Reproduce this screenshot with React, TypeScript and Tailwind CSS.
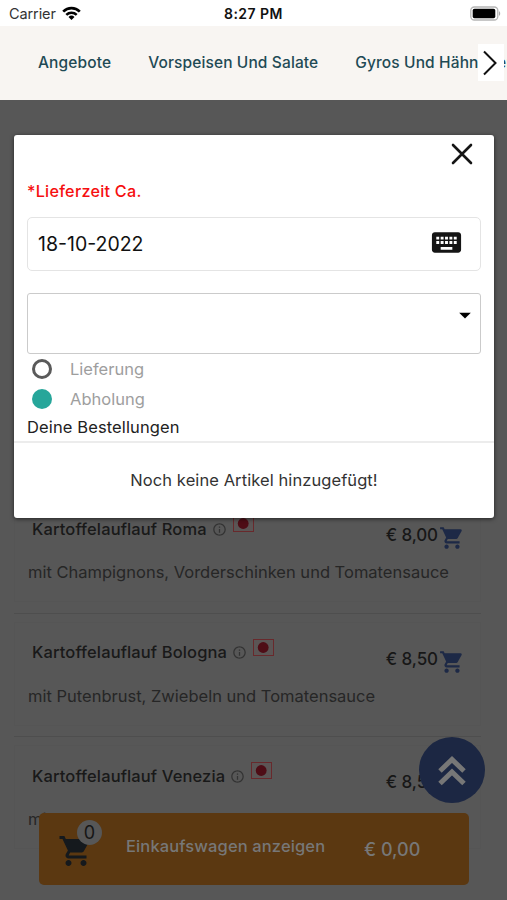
import { MdInfoOutline, MdKeyboard, MdShoppingCart, MdArrowDropDown } from "react-icons/md";

const categories = ["Angebote", "Vorspeisen Und Salate", "Gyros Und Hähnchen"];

const dishes = [
  {
    id: 1,
    name: "Kartoffelauflauf Roma",
    description: "mit Champignons, Vorderschinken und Tomatensauce",
    price: "€ 8,00",
  },
  {
    id: 2,
    name: "Kartoffelauflauf Bologna",
    description: "mit Putenbrust, Zwiebeln und Tomatensauce",
    price: "€ 8,50",
  },
  {
    id: 3,
    name: "Kartoffelauflauf Venezia",
    description: "mit",
    price: "€ 8,50",
  },
];

function StatusBar() {
  return (
    <div className="relative flex h-[26px] items-center justify-between bg-white pl-[9px] pr-[6px] text-[#111]">
      <div className="flex items-center gap-[6px] pt-[2px]">
        <span className="text-[14.5px] leading-5 tracking-[-0.1px] text-[#333]">Carrier</span>
        <svg width="19" height="15" viewBox="0 0 19 15" fill="none" stroke="#000" className="mb-[2px]">
          <path d="M1.2 5.6a11.8 11.8 0 0 1 16.6 0" strokeWidth="2.7" />
          <path d="M4.3 8.8a7.4 7.4 0 0 1 10.4 0" strokeWidth="2.5" />
          <path d="M9.5 14l-3-3.1a4.3 4.3 0 0 1 6 0z" fill="#000" stroke="none" />
        </svg>
      </div>
      <span className="absolute left-[224px] top-[4px] whitespace-nowrap text-[14px] font-semibold leading-5 tracking-[0.45px]">8:27 PM</span>
      <svg width="31" height="15" viewBox="0 0 31 15" className="shrink-0">
        <rect x="0.8" y="1" width="27" height="13" rx="3.5" fill="#fff" stroke="#b5b5b5" strokeWidth="1.3" />
        <rect x="2.7" y="2.7" width="22.6" height="9.6" rx="1.8" fill="#000" />
        <path d="M29 5.2c1.6.6 1.6 4 0 4.6z" fill="#aaa" />
      </svg>
    </div>
  );
}

function CategoryNav() {
  return (
    <nav className="relative flex h-[74px] items-center gap-[37px] overflow-hidden bg-[#f8f5f2] pl-[38px]">
      {categories.map((category) => (
        <a key={category} className="shrink-0 whitespace-nowrap text-[15.5px] font-medium tracking-[0.12px] text-[#1f4a55]">
          {category}
        </a>
      ))}
      <button type="button" className="absolute left-[478px] top-[18px] flex h-[37px] w-[26px] items-center justify-center bg-white">
        <svg width="16" height="26" viewBox="0 0 16 26" fill="none" stroke="#111" strokeWidth="2" className="-ml-[2px]">
          <path d="M2 1.500l11.500 11.500L2 24.500" />
        </svg>
      </button>
    </nav>
  );
}

function Dish({ name, description, price }: { name: string; description: string; price: string }) {
  return (
    <div className="h-[123.5px] border-t border-[#4e4e4e] pt-[8px]">
      <div className="h-[104px] border border-[#555] pl-[13px] pr-[15px] pt-[17px]">
        <div className="flex h-[26px] justify-between">
          <div className="flex items-center pl-[4px]">
            <span className="text-[16.5px] font-medium tracking-[0.12px] text-[#191919]">{name}</span>
            <MdInfoOutline className="ml-[5px] text-[15px] text-[#333]" />
            <svg width="21" height="17" viewBox="0 0 21 17" className="mb-[11px] ml-[6px]">
              <rect x="0.5" y="0.5" width="20" height="16" fill="#5b5555" stroke="#68292c" />
              <circle cx="10.2" cy="8.5" r="5.4" fill="#4e0d16" />
            </svg>
          </div>
          <div className="flex items-center pt-[14px]">
            <span className="text-[17px] font-medium tracking-[-0.1px] text-[#171717]">{price}</span>
            <MdShoppingCart className="ml-px mt-[4px] text-[26px] text-[#1d2946]" />
          </div>
        </div>
        <p className="mt-[18px] whitespace-nowrap text-[16.5px] leading-6 text-[#262626]">{description}</p>
      </div>
    </div>
  );
}

function CartBar() {
  return (
    <div className="absolute left-[39px] top-[813px] flex h-[72px] w-[430px] items-center rounded-[5px] bg-[#5b3811]">
      <div className="relative ml-[19px] h-full w-[50px]">
        <MdShoppingCart className="absolute left-0 top-[20px] text-[36px] text-[#15191d]" />
        <span className="absolute left-[19px] top-[7px] flex size-[25px] items-center justify-center rounded-full bg-[#575757] text-[18px] text-[#151515]">
          0
        </span>
      </div>
      <span className="ml-[18px] mt-[-6px] w-[238px] whitespace-nowrap text-[16.5px] font-medium tracking-[0.12px] text-[#777]">
        Einkaufswagen anzeigen
      </span>
      <span className="whitespace-nowrap text-[18px] font-medium text-[#777]">€ 0,00</span>
    </div>
  );
}

function OrderDialog() {
  return (
    <div className="absolute left-[14px] top-[135px] h-[383px] w-[480px] rounded-[3px] bg-white pt-[7px] shadow-[0_1px_4px_rgba(0,0,0,0.6)]">
      <div className="flex h-[24px] justify-end pr-[21px]">
        <svg width="22" height="22" viewBox="0 0 22 22" stroke="#151515" strokeWidth="2.6" strokeLinecap="round" className="mt-px">
          <path d="M2 2l18 18M20 2L2 20" />
        </svg>
      </div>
      <div className="pl-[13px] pr-[13px]">
        <p className="mt-[13px] text-[16.2px] font-medium leading-6 tracking-[0.25px] text-[#f60f10]">*Lieferzeit Ca.</p>
        <div className="mt-[14px] flex h-[54px] items-center justify-between rounded-[5px] border border-[#e4e4e4] pl-[10px] pr-[16px]">
          <span className="pt-[2px] text-[19.5px] text-[#111]">18-10-2022</span>
          <MdKeyboard className="mb-[3px] text-[35px] text-[#151515]" />
        </div>
        <div className="mt-[22px] flex h-[61px] justify-end rounded-[3px] border border-[#cbcbcb] pr-px pt-[7px]">
          <MdArrowDropDown className="text-[28px] text-black" />
        </div>
        <label className="flex h-[30px] items-center pl-[5px]">
          <span className="size-[20px] rounded-full border-[3px] border-[#5a5a5a]" />
          <span className="ml-[18px] text-[16.5px] text-[#9e9e9e]">Lieferung</span>
        </label>
        <label className="flex h-[30px] items-center pl-[5px]">
          <span className="size-[20px] rounded-full bg-[#26a69a]" />
          <span className="ml-[18px] text-[16.5px] text-[#9e9e9e]">Abholung</span>
        </label>
        <p className="h-[27px] text-[16.5px] leading-[27px] tracking-[0.12px] text-[#222]">Deine Bestellungen</p>
      </div>
      <div className="flex h-[77px] items-center justify-center border-t-2 border-[#ececec]">
        <p className="text-[16.5px] tracking-[0.08px] text-[#333]">Noch keine Artikel hinzugefügt!</p>
      </div>
    </div>
  );
}

export default function App() {
  return (
    <div className="relative h-[900px] w-[507px] overflow-hidden bg-[#575757] font-[Inter,sans-serif]">
      <StatusBar />
      <CategoryNav />
      <main className="ml-[14px] w-[467px] pt-[389px]">
        {dishes.map((dish) => (
          <Dish key={dish.id} name={dish.name} description={dish.description} price={dish.price} />
        ))}
      </main>
      <CartBar />
      <button type="button" className="absolute left-[419px] top-[737px] flex size-[66px] items-center justify-center rounded-full bg-[#1c2743]">
        <svg width="28" height="31" viewBox="0 0 28 31" fill="none" stroke="#777" strokeWidth="5">
          <path d="M2 16L14 4.500L26 16M2 28.500L14 17L26 28.500" />
        </svg>
      </button>
      <OrderDialog />
    </div>
  );
}
